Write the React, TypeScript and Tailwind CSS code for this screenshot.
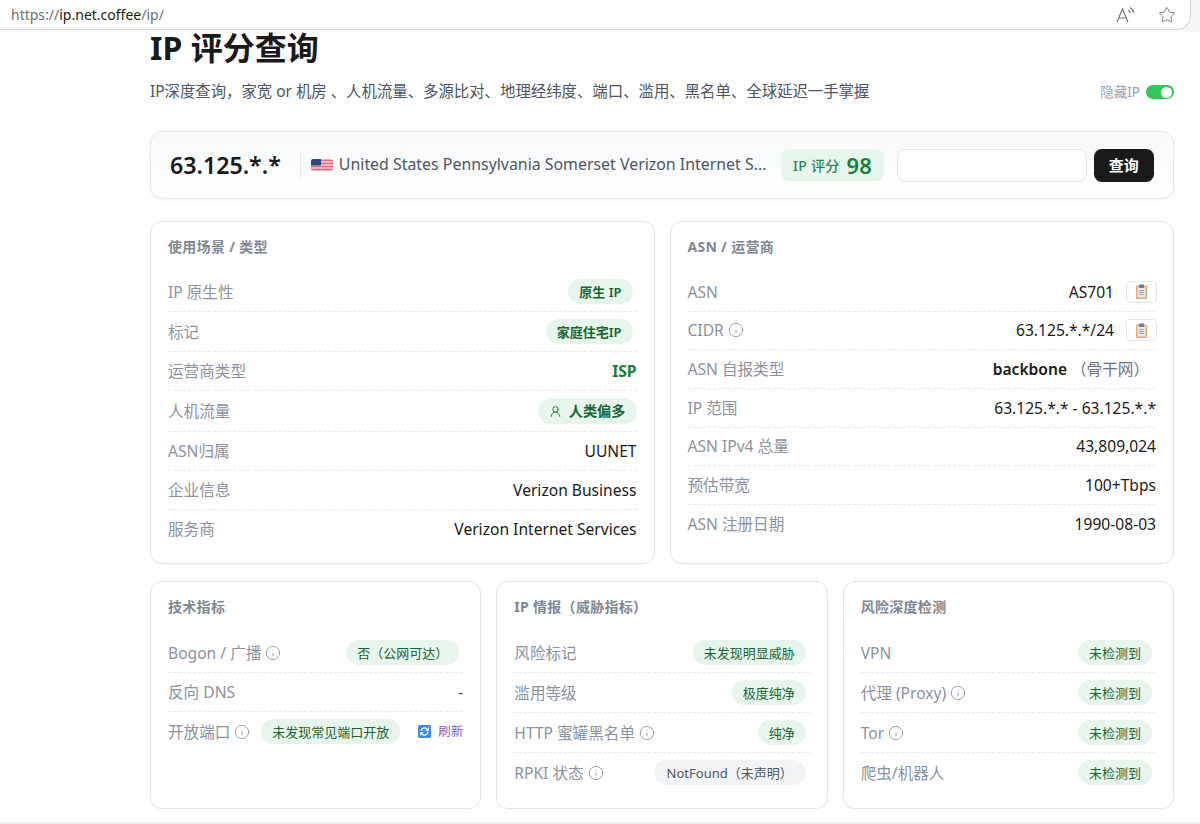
import { Info, Star, UserRound } from "lucide-react"
import type { ReactNode } from "react"

const FONT = "[font-family:'Noto_Sans','Noto_Sans_CJK_SC',sans-serif]"

function Tip() {
  return <Info size={16} strokeWidth={1.3} className="ml-[4px] inline-block shrink-0 text-[#8b929c]" />
}

function Pill({ children, gray, className = "" }: { children: ReactNode; gray?: boolean; className?: string }) {
  return (
    <span
      className={`inline-flex h-[25px] items-center rounded-full px-[11px] text-[13px] ${
        gray ? "bg-[#f3f4f6] text-[#4b5563]" : "bg-[#e8f5ec] text-[#166534]"
      } ${className}`}
    >
      {children}
    </span>
  )
}

function Clip() {
  return (
    <button className="-mr-px ml-[12px] flex h-[22px] w-[31px] items-center justify-center rounded-[4px] border border-[#e5e7eb] bg-white">
      <svg width="11" height="15" viewBox="0 0 11 15">
        <rect x="0" y="1.5" width="11" height="13.5" rx="1" fill="#e3a97f" />
        <rect x="1.5" y="3" width="8" height="10.5" fill="#e6e8ee" />
        <rect x="3" y="0.5" width="5" height="3.5" rx="0.8" fill="#6f7a88" />
        <path d="M3 6.5h5M3 8.5h5M3 10.5h5" stroke="#8f98a4" strokeWidth="0.9" />
      </svg>
    </button>
  )
}

function Row({ label, children, last, dense }: { label: ReactNode; children: ReactNode; last?: boolean; dense?: boolean }) {
  return (
    <div
      className={`flex items-center justify-between text-[15.6px] text-[#1a1a1a] ${
        dense ? "py-[6.83px] leading-[24px]" : "py-[7px] leading-[24px]"
      } ${last ? "" : "border-b border-dashed border-[#e8e9ec]"}`}
    >
      <span className="flex items-center text-[#8b929c]">{label}</span>
      {children}
    </div>
  )
}

function Card({ title, children }: { title: string; children: ReactNode }) {
  return (
    <section className="rounded-[12px] border border-[#e2e5ea] bg-white px-[17px] pt-[15px] pb-[14px] shadow-[0_1px_2px_rgba(0,0,0,0.03)]">
      <h3 className="mb-[16px] text-[14px] leading-[20px] font-bold tracking-[0.3px] text-[#7f8792]">{title}</h3>
      {children}
    </section>
  )
}

function Flag() {
  return (
    <svg width="22" height="12" viewBox="0 0 22 12" className="shrink-0">
      <rect width="22" height="12" rx="2.5" fill="#f3b3bd" />
      <path d="M0 1.5h22M0 4.5h22M0 7.5h22M0 10.5h22" stroke="#de6f82" strokeWidth="1" />
      <path d="M2.5 0H10v6.5H0V2.5A2.5 2.5 0 0 1 2.5 0z" fill="#2f4a80" />
    </svg>
  )
}

function Refresh() {
  return (
    <svg width="13" height="13" viewBox="0 0 13 13" className="mr-[7px]">
      <rect width="13" height="13" rx="1.5" fill="#3f8be8" />
      <path d="M3 6a3.5 3.5 0 0 1 6-2l1 1M10 7a3.5 3.5 0 0 1-6 2L3 8" fill="none" stroke="#fff" strokeWidth="1.2" />
      <path d="M10.5 2.5v3h-3M2.5 10.5v-3h3" fill="none" stroke="#fff" strokeWidth="0.9" />
    </svg>
  )
}

export default function App() {
  return (
    <div className={`flex h-screen flex-col overflow-hidden bg-white ${FONT}`}>
      <header className="bg-[#f7f7f7]">
        <div className="flex h-[30px] w-[1191px] items-center justify-between rounded-br-[14px] border-r border-b border-[#d4d4d8] bg-white pr-[14px] pl-[11px]">
          <div className="text-[14px] text-[#707070]">
            https://<span className="text-[#1a1a1a]">ip.net.coffee</span>/ip/
          </div>
          <div className="flex items-center gap-[22px] text-[#707070]">
            <svg width="20" height="18" viewBox="0 0 20 18" fill="none" stroke="currentColor" strokeWidth="1.1">
              <path d="M1 16 6.5 3 12 16M3 12h7" />
              <path d="M12 4c1.3.8 2 1.7 2.2 3.2M14 1.5c2 1.3 3.2 3 3.4 5.4" />
            </svg>
            <Star size={18} strokeWidth={1.2} />
          </div>
        </div>
      </header>
      <div className="h-[2px] bg-[#f7f7f7]" />

      <main className="min-h-0 flex-1 pr-[26px] pl-[150px]">
        <h1 className="text-[32px] leading-[32px] font-bold text-[#1a1a1a]">IP 评分查询</h1>
        <div className="mt-[16px] flex items-center justify-between">
          <p className="text-[15.4px] leading-[24px] text-[#4b5563]">
            IP深度查询，家宽 or 机房 、人机流量、多源比对、地理经纬度、端口、滥用、黑名单、全球延迟一手掌握
          </p>
          <div className="flex items-center gap-[6px] text-[13.5px] text-[#9ca3af]">
            隐藏IP
            <span className="flex h-[14px] w-[28px] items-center justify-end rounded-full bg-[#34c759] pr-[2px]">
              <span className="h-[11px] w-[11px] rounded-full bg-white" />
            </span>
          </div>
        </div>

        <section className="mt-[27px] flex h-[68px] items-center rounded-[12px] border border-[#e2e5ea] bg-gradient-to-b from-[#f8f9fb] to-white px-[19px] shadow-[0_1px_3px_rgba(0,0,0,0.05)]">
          <div className="text-[23.2px] leading-[30px] font-semibold text-[#1a1a1a]">63.125.*.*</div>
          <div className="mr-[10px] ml-[19px] h-[26px] w-px bg-[#e5e7eb]" />
          <Flag />
          <div className="ml-[6px] w-[428px] text-[15.9px] whitespace-nowrap text-[#4b5563]">
            United States Pennsylvania Somerset Verizon Internet S...
          </div>
          <div className="ml-[14px] flex h-[32px] w-[103px] items-center justify-center gap-[7px] rounded-[8px] bg-[#e8f5ec] text-[#2f855a]">
            <span className="text-[14px] font-medium tracking-[0.3px]">IP 评分</span>
            <span className="text-[22px] leading-[24px] font-semibold text-[#15803d]">98</span>
          </div>
          <input className="ml-[13px] h-[33px] w-[190px] rounded-[8px] border border-[#e2e5ea] bg-white" />
          <button className="ml-[7px] h-[33px] w-[60px] rounded-[8px] bg-[#1a1a1a] text-[15px] font-bold text-white">查询</button>
        </section>

        <div className="mt-[22px] grid grid-cols-2 gap-[15px]">
          <Card title="使用场景 / 类型">
            <div className="-mt-px pb-px">
              <Row label="IP 原生性"><Pill className="mr-[4px] font-semibold">原生 IP</Pill></Row>
              <Row label="标记"><Pill className="mr-[4px] font-semibold">家庭住宅IP</Pill></Row>
              <Row label="运营商类型"><span className="font-bold text-[#15803d]">ISP</span></Row>
              <Row label="人机流量">
                <span className="inline-flex h-[26px] items-center gap-[7px] rounded-full bg-[#e8f5ec] px-[11px] text-[14.2px] font-semibold text-[#166534]">
                  <UserRound size={13} strokeWidth={1.8} className="text-[#15803d]" />
                  人类偏多
                </span>
              </Row>
              <Row label="ASN归属">UUNET</Row>
              <Row label="企业信息">Verizon Business</Row>
              <Row label="服务商" last>Verizon Internet Services</Row>
            </div>
          </Card>
          <Card title="ASN / 运营商">
            <Row dense label="ASN"><span className="flex items-center">AS701<Clip /></span></Row>
            <Row dense label={<>CIDR<Tip /></>}><span className="flex items-center">63.125.*.*/24<Clip /></span></Row>
            <Row dense label="ASN 自报类型">
              <span className="mr-[7px]"><b className="font-semibold">backbone</b><span className="ml-[4px] text-[#6b7280]">（骨干网）</span></span>
            </Row>
            <Row dense label="IP 范围">63.125.*.* - 63.125.*.*</Row>
            <Row dense label="ASN IPv4 总量">43,809,024</Row>
            <Row dense label="预估带宽">100+Tbps</Row>
            <Row dense label="ASN 注册日期" last>1990-08-03</Row>
          </Card>
        </div>

        <div className="mt-[17px] grid h-[228px] grid-cols-3 gap-[15px]">
          <Card title="技术指标">
            <Row label={<>Bogon / 广播<Tip /></>}><Pill className="mr-[4px] w-[113px] justify-center">否（公网可达）</Pill></Row>
            <Row label="反向 DNS"><span className="text-[#4b5563]">-</span></Row>
            <Row label={<>开放端口<Tip /></>} last>
              <span className="flex items-center">
                <Pill>未发现常见端口开放</Pill>
                <span className="ml-[18px] flex items-center text-[12.5px] text-[#7c5cc4]"><Refresh />刷新</span>
              </span>
            </Row>
          </Card>
          <Card title="IP 情报（威胁指标）">
            <Row label="风险标记"><Pill className="mr-[4px]">未发现明显威胁</Pill></Row>
            <Row label="滥用等级"><Pill className="mr-[4px]">极度纯净</Pill></Row>
            <Row label={<>HTTP 蜜罐黑名单<Tip /></>}><Pill className="mr-[4px]">纯净</Pill></Row>
            <Row label={<>RPKI 状态<Tip /></>} last><Pill gray className="mr-[4px] w-[152px] justify-center">NotFound（未声明）</Pill></Row>
          </Card>
          <Card title="风险深度检测">
            <Row label="VPN"><Pill className="mr-[4px]">未检测到</Pill></Row>
            <Row label={<>代理 (Proxy)<Tip /></>}><Pill className="mr-[4px]">未检测到</Pill></Row>
            <Row label={<>Tor<Tip /></>}><Pill className="mr-[4px]">未检测到</Pill></Row>
            <Row label="爬虫/机器人" last><Pill className="mr-[4px]">未检测到</Pill></Row>
          </Card>
        </div>
      </main>
      <div className="h-[2px] bg-[#ececec]" />
    </div>
  )
}
